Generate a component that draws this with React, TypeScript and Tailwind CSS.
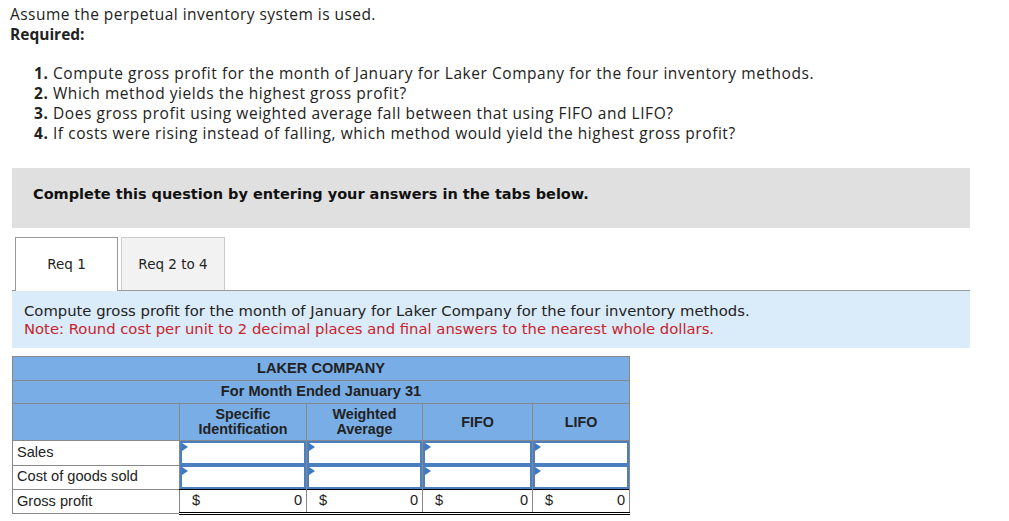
const items = [
  "Compute gross profit for the month of January for Laker Company for the four inventory methods.",
  "Which method yields the highest gross profit?",
  "Does gross profit using weighted average fall between that using FIFO and LIFO?",
  "If costs were rising instead of falling, which method would yield the highest gross profit?",
];

const cols = ["w-[127px]", "w-[116px]", "w-[110px]", "w-[97px]"];

const InputCell = ({ w }: { w: string }) => (
  <td className={`${w} border-r border-[#888] p-0 h-6`}>
    <div className="relative h-6 border-2 border-[#4a7fc1] bg-white">
      <div className="absolute left-0 top-0 w-0 h-0 border-t-[4px] border-b-[4px] border-l-[6px] border-t-transparent border-b-transparent border-l-[#3d78c4]" />
    </div>
  </td>
);

const App = () => {
  return (
    <div className="w-[1009px] h-[521px] bg-white text-[#222] overflow-hidden">
      <div className="pl-[10px] pt-[4px] font-['Open_Sans',sans-serif] text-[15.5px] tracking-[0.45px] leading-[20px]">
        <p>Assume the perpetual inventory system is used.</p>
        <p className="font-bold tracking-normal">Required:</p>
      </div>

      <ol className="mt-[19px] pl-[34px] font-['Open_Sans',sans-serif] text-[15.5px] tracking-[0.55px] leading-[20px]">
        {items.map((t, i) => (
          <li key={i}>
            <span className="font-bold">{i + 1}.</span> {t}
          </li>
        ))}
      </ol>

      <div className="mx-[12px] mt-[25px] w-[958px] h-[60px] bg-[#e0e0e0] pl-[21px] pt-[16px] font-['DejaVu_Sans',sans-serif] text-[14.5px] leading-[20px] font-bold text-[#111]">
        Complete this question by entering your answers in the tabs below.
      </div>

      <div className="mx-[12px] mt-[9px] w-[958px]">
        <div className="h-[54px] flex items-end gap-[3px] pl-[3px] border-b border-[#999] font-['DejaVu_Sans',sans-serif] text-[13.5px] text-[#222]">
          <div className="w-[103px] h-[54px] -mb-px bg-white border border-b-0 border-[#999] flex items-center justify-center">
            Req 1
          </div>
          <div className="w-[104px] h-[53px] bg-[#f2f2f2] border border-b-0 border-[#ccc] flex items-center justify-center">
            Req 2 to 4
          </div>
        </div>
        <div className="h-[57px] bg-[#daebf9] pl-[12px] pt-[11px] font-['DejaVu_Sans',sans-serif] text-[14.8px] leading-[18px]">
          <p className="text-[#222]">
            Compute gross profit for the month of January for Laker Company for the four inventory methods.
          </p>
          <p className="text-[#c8232c]">
            Note: Round cost per unit to 2 decimal places and final answers to the nearest whole dollars.
          </p>
        </div>
      </div>

      <table className="ml-[12px] mt-[8px] border-collapse font-['Liberation_Sans',sans-serif] text-[14.6px] text-[#222]">
        <tbody>
          <tr className="bg-[#78ade6] h-[24px]">
            <td colSpan={5} className="border border-[#888] text-center font-bold">
              LAKER COMPANY
            </td>
          </tr>
          <tr className="bg-[#78ade6] h-[23px]">
            <td colSpan={5} className="border border-[#888] text-center font-bold">
              For Month Ended January 31
            </td>
          </tr>
          <tr className="bg-[#78ade6] h-[37px] font-bold text-[14.3px] leading-[15px]">
            <td className="w-[167px] border border-[#888]" />
            <td className="w-[127px] border border-[#888] text-center">
              Specific
              <br />
              Identification
            </td>
            <td className="w-[116px] border border-[#888] text-center">
              Weighted
              <br />
              Average
            </td>
            <td className="w-[110px] border border-[#888] text-center">FIFO</td>
            <td className="w-[97px] border border-[#888] text-center">LIFO</td>
          </tr>
          <tr className="h-[24px]">
            <td className="border border-[#888] pl-[4px]">Sales</td>
            {cols.map((w) => (
              <InputCell key={w} w={w} />
            ))}
          </tr>
          <tr className="h-[24px]">
            <td className="border border-[#888] pl-[4px]">Cost of goods sold</td>
            {cols.map((w) => (
              <InputCell key={w} w={w} />
            ))}
          </tr>
          <tr className="h-[23px]">
            <td className="border border-[#888] pl-[4px]">Gross profit</td>
            {cols.map((w) => (
              <td key={w} className={`${w} border-r border-[#888] border-t border-t-black border-b-[3px] border-b-black border-double p-0`}>
                <div className="flex justify-between pl-[12px] pr-[4px]">
                  <span>$</span>
                  <span>0</span>
                </div>
              </td>
            ))}
          </tr>
        </tbody>
      </table>
    </div>
  );
};

export default App;
